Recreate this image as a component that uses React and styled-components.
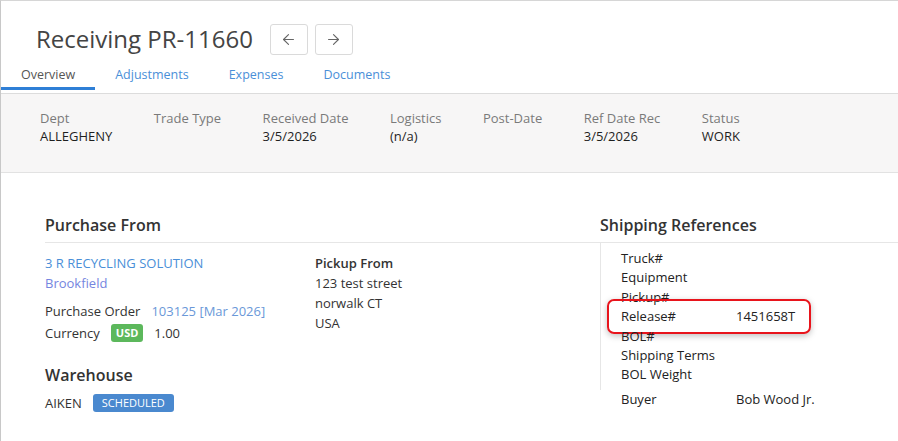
import styled, { createGlobalStyle } from "styled-components";
import { ArrowLeft, ArrowRight } from "lucide-react";

const GlobalStyle = createGlobalStyle`
  body {
    margin: 0;
    background: #fff;
    font-family: "Open Sans", "Liberation Sans", sans-serif;
    font-size: 13px;
    color: #333;
  }
`;

const summary = [
  { label: "Dept", value: "ALLEGHENY" },
  { label: "Trade Type", value: "" },
  { label: "Received Date", value: "3/5/2026" },
  { label: "Logistics", value: "(n/a)" },
  { label: "Post-Date", value: "" },
  { label: "Ref Date Rec", value: "3/5/2026" },
  { label: "Status", value: "WORK" },
];

const refs = [
  { label: "Truck#", value: "" },
  { label: "Equipment", value: "" },
  { label: "Pickup#", value: "" },
  { label: "Release#", value: "1451658T", marked: true },
  { label: "BOL#", value: "" },
  { label: "Shipping Terms", value: "" },
  { label: "BOL Weight", value: "" },
];

const tabs = ["Overview", "Adjustments", "Expenses", "Documents"];

const App = () => {
  return (
    <>
      <GlobalStyle />
      <Page>
        <Header>
          <Title>Receiving PR-11660</Title>
          <NavButtons>
            <NavButton>
              <ArrowLeft size={17} strokeWidth={1.6} />
            </NavButton>
            <NavButton>
              <ArrowRight size={17} strokeWidth={1.6} />
            </NavButton>
          </NavButtons>
        </Header>

        <Tabs>
          {tabs.map((t, i) => (
            <Tab key={t} $active={i === 0}>
              {t}
            </Tab>
          ))}
        </Tabs>

        <SummaryBand>
          {summary.map((s) => (
            <SummaryItem key={s.label}>
              <SummaryLabel>{s.label}</SummaryLabel>
              <SummaryValue>{s.value || "\u00a0"}</SummaryValue>
            </SummaryItem>
          ))}
        </SummaryBand>

        <Main>
          <LeftCol>
            <SectionTitle>Purchase From</SectionTitle>
            <PurchaseBody>
              <VendorCol>
                <LinkText>3 R RECYCLING SOLUTION</LinkText>
                <LinkText $visited>Brookfield</LinkText>
                <InfoRow $first>
                  <span>Purchase Order</span>
                  <OrderLink>103125 [Mar 2026]</OrderLink>
                </InfoRow>
                <InfoRow>
                  <span>Currency</span>
                  <Badge $color="#5cb85c" $bold>USD</Badge>
                  <span>1.00</span>
                </InfoRow>
                <SubTitle>Warehouse</SubTitle>
                <InfoRow>
                  <span>AIKEN</span>
                  <Badge $color="#4a89cf">SCHEDULED</Badge>
                </InfoRow>
              </VendorCol>
              <AddressCol>
                <strong>Pickup From</strong>
                <span>123 test street</span>
                <span>norwalk CT</span>
                <span>USA</span>
              </AddressCol>
            </PurchaseBody>
          </LeftCol>

          <RightCol>
            <SectionTitle>Shipping References</SectionTitle>
            <RefList>
              {refs.map((r) => (
                <RefRow key={r.label}>
                  <span>{r.label}</span>
                  <span>{r.value}</span>
                  {r.marked && <Highlight />}
                </RefRow>
              ))}
            </RefList>
            <BuyerRow>
              <span>Buyer</span>
              <span>Bob Wood Jr.</span>
            </BuyerRow>
          </RightCol>
        </Main>
      </Page>
    </>
  );
};

export default App;

const Page = styled.div`
  height: 440px;
  border-top: 1px solid #d6d6d6;
  border-left: 1px solid #c8c8c8;
  overflow: hidden;
`;

const Header = styled.div`
  display: flex;
  align-items: center;
  padding: 23px 0 0 35px;
  height: 30px;
`;

const Title = styled.h1`
  margin: 0;
  font-size: 24px;
  font-weight: 400;
  line-height: 30px;
  color: #444;
`;

const NavButtons = styled.div`
  display: flex;
  gap: 7px;
  margin-left: 17px;
`;

const NavButton = styled.button`
  width: 38px;
  height: 31px;
  display: flex;
  align-items: center;
  justify-content: center;
  background: #fff;
  border: 1px solid #dadada;
  border-radius: 3px;
  color: #666;
  padding: 0;
`;

const Tabs = styled.div`
  display: flex;
  margin-top: 8px;
  padding-bottom: 3px;
  border-bottom: 1px solid #dcdcdc;
`;

const Tab = styled.div`
  padding: 1px 20px 0;
  height: 24px;
  line-height: 24px;
  font-size: 12.5px;
  color: ${(p) => (p.$active ? "#555" : "#4a8fd8")};
  border-bottom: 3px solid ${(p) => (p.$active ? "#2f7fd6" : "transparent")};
`;

const SummaryBand = styled.div`
  display: flex;
  gap: 41.5px;
  padding: 15px 0 0 39px;
  height: 63px;
  background: #f7f6f6;
  border-bottom: 1px solid #e2e2e2;
`;

const SummaryItem = styled.div`
  display: flex;
  flex-direction: column;
  line-height: 18px;
`;

const SummaryLabel = styled.div`
  color: #7a7a7a;
`;

const SummaryValue = styled.div`
  color: #1f1f1f;
`;

const Main = styled.div`
  display: flex;
  padding: 41px 0 0 44px;
`;

const LeftCol = styled.div`
  width: 555px;
`;

const RightCol = styled.div`
  flex: 1;
`;

const SectionTitle = styled.h2`
  margin: 0;
  font-size: 16px;
  font-weight: 600;
  line-height: 22px;
  color: #333;
  padding-bottom: 6px;
  border-bottom: 1px solid #e6e6e6;
`;

const PurchaseBody = styled.div`
  display: flex;
  padding-top: 10px;
`;

const VendorCol = styled.div`
  width: 270px;
  display: flex;
  flex-direction: column;
  line-height: 20px;
`;

const AddressCol = styled.div`
  display: flex;
  flex-direction: column;
  line-height: 20px;
  color: #333;

  strong {
    font-weight: 600;
  }
`;

const LinkText = styled.span`
  color: ${(p) => (p.$visited ? "#7585e0" : "#4a8fd8")};
`;

const OrderLink = styled.span`
  color: #6a98d8;
`;

const InfoRow = styled.div`
  display: flex;
  align-items: center;
  gap: 11px;
  height: 22px;
  margin-top: ${(p) => (p.$first ? "7px" : "0")};
`;

const Badge = styled.span`
  display: inline-block;
  background: ${(p) => p.$color};
  color: #fff;
  font-size: 11px;
  font-weight: ${(p) => (p.$bold ? 700 : 400)};
  line-height: 18px;
  padding: 0 ${(p) => (p.$bold ? "5px" : "9px")};
  border-radius: 3px;
`;

const SubTitle = styled.h3`
  margin: 20px 0 6px;
  font-size: 16px;
  font-weight: 600;
  line-height: 22px;
  color: #333;
`;

const RefList = styled.div`
  border-left: 1px solid #e6e6e6;
  padding: 6px 0 5px 20px;
`;

const RefRow = styled.div`
  position: relative;
  display: grid;
  grid-template-columns: 115px 1fr;
  line-height: 19.4px;
  color: #222;
`;

const Highlight = styled.div`
  position: absolute;
  left: -14px;
  top: -8px;
  width: 200px;
  height: 31px;
  border: 2px solid #e8141c;
  border-radius: 7px;
  box-shadow: 0 2px 6px rgba(0, 0, 0, 0.25);
  pointer-events: none;
`;

const BuyerRow = styled.div`
  display: grid;
  grid-template-columns: 115px 1fr;
  padding-left: 21px;
  line-height: 19.4px;
  color: #222;
`;
